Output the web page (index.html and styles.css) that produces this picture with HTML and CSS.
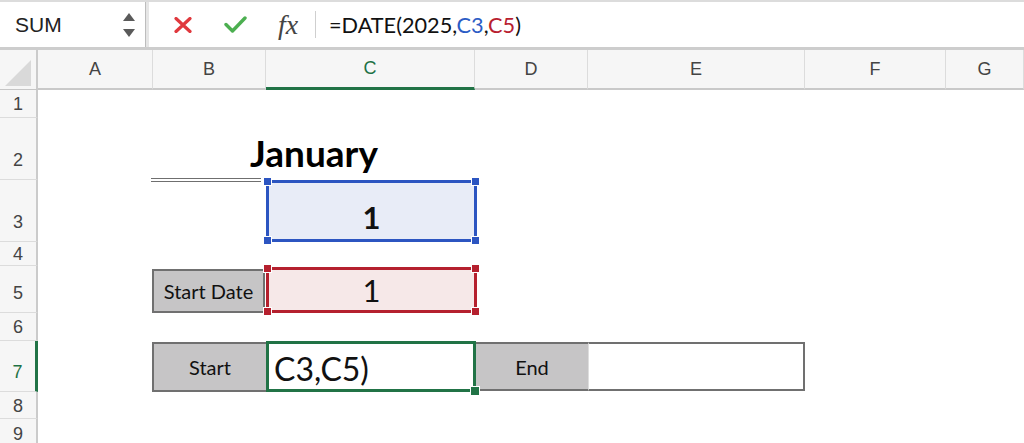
FILE: index.html
```html
<!DOCTYPE html>
<html>
<head>
  <title>Date formula</title>
  <link rel="stylesheet" href="styles.css">
</head>
<body>
  <div class="formula-bar">
    <div class="name-box">
      <span>SUM</span>
      <svg class="spin" width="14" height="28" viewBox="0 0 14 28">
        <path d="M7 2 L13 10 L1 10 Z" fill="#5a5a5a"/>
        <path d="M1 18 L13 18 L7 26 Z" fill="#5a5a5a"/>
      </svg>
    </div>
    <div class="formula-main">
      <svg class="icon-cancel" width="20" height="16" viewBox="0 0 20 16">
        <path d="M3 1.5 L17 14.5 M17 1.5 L3 14.5" stroke="#e0393e" stroke-width="3.2" stroke-linecap="round"/>
      </svg>
      <svg class="icon-ok" width="23" height="17" viewBox="0 0 23 17">
        <path d="M2 8.5 L8.5 15 L21 2" fill="none" stroke="#4caf50" stroke-width="3.4" stroke-linecap="round" stroke-linejoin="round"/>
      </svg>
      <span class="fx">fx</span>
      <span class="divider"></span>
      <div class="formula-text">=DATE(2025,<span class="ref-blue">C3</span>,<span class="ref-red">C5</span>)</div>
    </div>
  </div>

  <div class="sheet">
    <div class="corner">
      <svg width="26" height="26" viewBox="0 0 26 26"><path d="M26 0 L26 26 L0 26 Z" fill="#d9d9d9"/></svg>
    </div>
    <div class="col-head">A</div>
    <div class="col-head">B</div>
    <div class="col-head active">C</div>
    <div class="col-head">D</div>
    <div class="col-head">E</div>
    <div class="col-head">F</div>
    <div class="col-head">G</div>

    <div class="row-head r1">1</div>
    <div class="row-head r2 tall">2</div>
    <div class="row-head r3 tall">3</div>
    <div class="row-head r4">4</div>
    <div class="row-head r5 tall">5</div>
    <div class="row-head r6">6</div>
    <div class="row-head r7 tall active">7</div>
    <div class="row-head r8">8</div>
    <div class="row-head r9">9</div>

    <!-- row 2 -->
    <div class="b2-line"></div>
    <div class="title">January</div>

    <!-- row 3 -->
    <div class="c3 ref-box blue">
      1
      <span class="handle tl"></span><span class="handle tr"></span>
      <span class="handle bl"></span><span class="handle br"></span>
    </div>

    <!-- row 5 -->
    <div class="b5 label">Start Date</div>
    <div class="c5 ref-box red">
      1
      <span class="handle tl"></span><span class="handle tr"></span>
      <span class="handle bl"></span><span class="handle br"></span>
    </div>

    <!-- row 7 -->
    <div class="b7 label">Start</div>
    <div class="c7 editing">C3,C5)<span class="fill-handle"></span></div>
    <div class="d7 label">End</div>
    <div class="e7"></div>
  </div>
</body>
</html>
```

FILE: styles.css
```css
* {
  box-sizing: border-box;
}

body {
  margin: 0;
  width: 1024px;
  height: 443px;
  overflow: hidden;
  background: #fff;
  font-family: 'Liberation Sans', Arial, sans-serif;
}

/* formula bar */

.formula-bar {
  display: flex;
  height: 50px;
  border-top: 2px solid #dcdcdc;
  border-bottom: 3px solid #cdcdcd;
  background: #e6e6e6;
}

.name-box {
  width: 146px;
  display: flex;
  align-items: center;
  justify-content: space-between;
  padding: 0 9px 0 15px;
  background: #fff;
  border-right: 1px solid #bdbdbd;
  font-size: 21px;
  color: #222;
}

.formula-main {
  flex: 1;
  margin-left: 3px;
  display: flex;
  align-items: center;
  background: #fff;
}

.icon-cancel {
  margin-left: 24px;
}

.icon-ok {
  margin-left: 31px;
}

.fx {
  margin-left: 31px;
  width: 24px;
  font-family: 'Liberation Serif', 'Times New Roman', serif;
  font-style: italic;
  font-size: 28px;
  color: #444;
  line-height: 1;
}

.divider {
  margin-left: 13px;
  width: 1px;
  height: 27px;
  background: #cfcfcf;
}

.formula-text {
  margin-left: 13px;
  font-family: Lato, sans-serif;
  font-size: 21.7px;
  color: #111;
}

.ref-blue {
  color: #2c5cc5;
}

.ref-red {
  color: #b8202f;
}

/* sheet grid */

.sheet {
  display: grid;
  grid-template-columns: 38px 115px 113px 209px 113px 217px 141px 78px;
  grid-template-rows: 40px 28px 62px 62px 24px 47px 28px 51px 27px 30px;
  font-family: Lato, sans-serif;
}

.corner {
  display: flex;
  align-items: flex-end;
  justify-content: flex-end;
  padding: 0 5px 3px 0;
  background: #f6f6f6;
  border-right: 2px solid #cbcbcb;
  border-bottom: 1px solid #c6c6c6;
}

.col-head {
  display: flex;
  align-items: center;
  justify-content: center;
  background: #f6f6f6;
  border-right: 1px solid #dcdcdc;
  border-bottom: 2px solid #c9c9c9;
  font-family: 'Liberation Sans', Arial, sans-serif;
  font-size: 18px;
  color: #444;
}

.col-head.active {
  color: #1e7145;
  border-bottom: 3px solid #217346;
}

.row-head {
  grid-column: 1;
  display: flex;
  align-items: center;
  justify-content: center;
  background: #f6f6f6;
  border-right: 2px solid #cbcbcb;
  border-bottom: 1px solid #dcdcdc;
  font-family: 'Liberation Sans', Arial, sans-serif;
  font-size: 18px;
  color: #444;
  padding-top: 2px;
}

.row-head.tall {
  align-items: flex-end;
  padding-bottom: 8px;
}

.row-head.active {
  color: #1e7145;
  border-right: 3px solid #217346;
}

.r1 { grid-row: 2; }
.r2 { grid-row: 3; }
.r3 { grid-row: 4; }
.r4 { grid-row: 5; }
.r5 { grid-row: 6; }
.r6 { grid-row: 7; }
.r7 { grid-row: 8; }
.r8 { grid-row: 9; }
.r9 { grid-row: 10; }

/* cells */

.b2-line {
  grid-column: 3;
  grid-row: 3;
  margin: 0 5px -2px -2px;
  border-bottom: 4px double #6f6f6f;
}

.title {
  grid-column: 3 / 5;
  grid-row: 3;
  display: flex;
  align-items: flex-end;
  justify-content: center;
  padding-bottom: 5px;
  font-size: 37px;
  font-weight: bold;
  color: #000;
}

.ref-box {
  position: relative;
  display: flex;
  align-items: center;
  justify-content: center;
  font-size: 31px;
  color: #111;
}

.ref-box.blue {
  border: 3px solid #2c55c1;
  background: #e8ecf7;
}

.ref-box.red {
  border: 3px solid #b5202e;
  background: #f6e8e8;
}

.c3 {
  grid-column: 4;
  grid-row: 4;
  margin-right: -2px;
  padding-top: 12px;
  font-weight: bold;
}

.c5 {
  grid-column: 4;
  grid-row: 6;
  margin-top: 1px;
  margin-right: -2px;
}

.handle {
  position: absolute;
  width: 9px;
  height: 9px;
  border: 1px solid #fff;
}

.blue .handle {
  background: #2c55c1;
}

.red .handle {
  background: #b5202e;
}

.handle.tl { left: -6px; top: -6px; }
.handle.tr { right: -6px; top: -6px; }
.handle.bl { left: -6px; bottom: -6px; }
.handle.br { right: -6px; bottom: -6px; }

.label {
  display: flex;
  align-items: center;
  justify-content: center;
  background: #c6c5c6;
  font-size: 20px;
  color: #111;
}

.b5 {
  grid-column: 3;
  grid-row: 6;
  margin: 3px 1px 0 -1px;
  border: 2px solid #707070;
}

.b7 {
  grid-column: 3;
  grid-row: 8;
  margin: 1px 0 0 -1px;
  border: 2px solid #707070;
  border-right: none;
}

.c7 {
  grid-column: 4;
  grid-row: 8;
  position: relative;
  margin-right: -1px;
  display: flex;
  align-items: center;
  padding: 3px 0 0 5px;
  border: 3px solid #217346;
  background: #fff;
  font-size: 32px;
  color: #111;
}

.fill-handle {
  position: absolute;
  right: -7px;
  bottom: -7px;
  width: 10px;
  height: 10px;
  background: #217346;
  border: 1px solid #fff;
}

.d7 {
  grid-column: 5;
  grid-row: 8;
  margin: 1px 0 1px 1px;
  border-top: 2px solid #707070;
  border-bottom: 2px solid #707070;
}

.e7 {
  grid-column: 6;
  grid-row: 8;
  margin: 1px 0 1px 0;
  background: #fff;
  border: 2px solid #707070;
  border-left: 1px solid #dedede;
}
```
